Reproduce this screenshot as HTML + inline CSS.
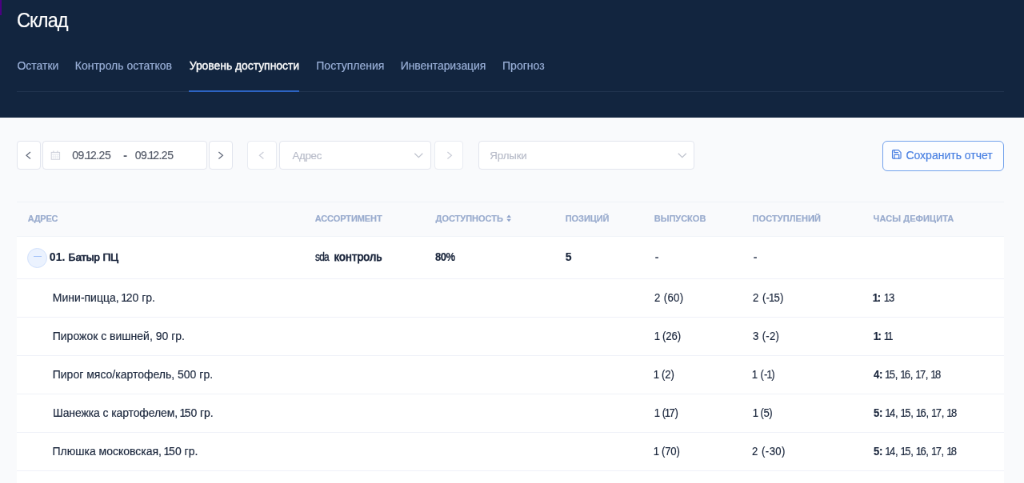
<!DOCTYPE html>
<html lang="ru">
<head>
<meta charset="utf-8">
<title>Склад</title>
<style>
*{box-sizing:border-box;margin:0;padding:0}
html,body{width:1024px;height:483px;overflow:hidden;background:#f9fafc}
body{font-family:"Liberation Sans",sans-serif;color:#1d2b44;position:relative}
#app{position:absolute;left:0;top:0;width:1280px;height:604px;transform:scale(0.8);transform-origin:0 0;background:#f9fafc;will-change:transform}
.hdr{position:absolute;left:0;top:0;width:1280px;height:147px;background:#12253f}
.purple{position:absolute;left:0;top:0;width:2.3px;height:19px;background:#4b0082}
.tabline{position:absolute;left:21px;top:114px;width:1234px;height:1px;background:#21344f}
.tabact{position:absolute;left:236px;top:113.3px;width:138.3px;height:1.7px;background:#2c63c2}
.box{position:absolute;top:176px;height:36px;background:#fff;border:1px solid #e2e5ee;border-radius:4px}
.box.dim{border-color:#e8ebf2}
.save{position:absolute;left:1102.5px;top:176px;width:152px;height:37.5px;border:1.4px solid #72a1ec;border-radius:6px;background:#fcfdff}
.t{position:absolute;line-height:40px;height:40px;white-space:nowrap;-webkit-text-stroke:0.18px currentColor}
.t b{font-weight:700}
.t i{font-style:normal;margin:0 -1.3px}
.t i.r{margin-right:-0.7px}
.tbl{position:absolute;left:21px;top:252px;width:1233.5px;height:352px;background:#fff}
.th{position:absolute;left:0;top:0;width:100%;height:43.5px;background:#f9fafc;border-top:1px solid #eff2f7;border-bottom:1px solid #f0f3f8}
.ln{position:absolute;left:0;width:100%;height:1px;background:#eff1f8}
svg{position:absolute;left:0;top:0;overflow:visible}
</style>
</head>
<body>
<div id="app">
<div class="hdr">
  <div class="purple"></div>
  <div class="tabline"></div>
  <div class="tabact"></div>
</div>

<div class="box" style="left:21px;width:30px"></div>
<div class="box" style="left:53px;width:205.5px"></div>
<div class="box" style="left:260.5px;width:30px"></div>
<div class="box dim" style="left:309.4px;width:36.2px"></div>
<div class="box" style="left:349.2px;width:190px"></div>
<div class="box dim" style="left:543.3px;width:36px"></div>
<div class="box" style="left:598.4px;width:269.6px"></div>
<div class="save"></div>

<div class="tbl">
  <div class="th"></div>
  <div class="ln" style="top:95.9px"></div>
  <div class="ln" style="top:143.9px"></div>
  <div class="ln" style="top:191.9px"></div>
  <div class="ln" style="top:239.9px"></div>
  <div class="ln" style="top:287.9px"></div>
  <div class="ln" style="top:335.9px"></div>
</div>
<div style="position:absolute;left:34px;top:309.5px;width:25px;height:25px;border-radius:50%;background:#ebf2fe;border:1px solid #d1e1fc"></div>
<div style="position:absolute;left:42.2px;top:319.9px;width:9.4px;height:1.3px;background:#a3c2f8"></div>

<svg width="1280" height="604" viewBox="0 0 1280 604" fill="none">
  <!-- chevrons -->
  <path d="M38 190 L33 194.2 L38 198.4" stroke="#626a7b" stroke-width="1.25"/>
  <path d="M273.4 190 L278.4 194.2 L273.4 198.4" stroke="#626a7b" stroke-width="1.25"/>
  <path d="M329.4 190 L324.4 194.2 L329.4 198.4" stroke="#cbced8" stroke-width="1.25"/>
  <path d="M559.4 190 L564.4 194.2 L559.4 198.4" stroke="#cbced8" stroke-width="1.25"/>
  <path d="M518.3 191.8 L523.3 196.6 L528.3 191.8" stroke="#bfc3ce" stroke-width="1.25"/>
  <path d="M847.8 191.8 L852.8 196.6 L857.8 191.8" stroke="#bfc3ce" stroke-width="1.25"/>
  <!-- calendar -->
  <rect x="64.2" y="190.4" width="10.4" height="8.8" stroke="#cdd0da" stroke-width="1"/>
  <path d="M66.9 188.6v2.4M71.9 188.6v2.4" stroke="#cdd0da" stroke-width="1.1"/>
  <path d="M64.5 192.9h10" stroke="#dcdfe7" stroke-width="0.8"/>
  <path d="M66.9 193.4v5.5M69.4 193.4v5.5M71.9 193.4v5.5M64.5 196h10" stroke="#e4e6ec" stroke-width="0.7"/>
  <!-- save icon -->
  <svg x="1113.8" y="185.9" width="14" height="14" viewBox="0 0 24 24" fill="none" stroke="#4a80e2" stroke-width="2.1" stroke-linecap="round" stroke-linejoin="round"><path d="M19 21H5a2 2 0 0 1-2-2V5a2 2 0 0 1 2-2h11l5 5v11a2 2 0 0 1-2 2z"/><path d="M17 21v-8H7v8"/><path d="M7 3v5h8"/></svg>
  <!-- sort -->
  <path d="M633.3 272.1 L636.1 268.5 L638.9 272.1z M633.3 273.7 L636.1 277.3 L638.9 273.7z" fill="#8fa3ca"/>
</svg>

<div class="t" style="left:20.82px;top:4.60px;font-size:25.6px;color:#ffffff;letter-spacing:-0.965px;transform:scaleX(0.92);transform-origin:0 0;">Склад</div>
<div class="t" style="left:21.39px;top:61.50px;font-size:14px;color:#9ab0d8;">Остатки</div>
<div class="t" style="left:93.77px;top:61.50px;font-size:14px;color:#9ab0d8;">Контроль остатков</div>
<div class="t" style="left:236.69px;top:61.50px;font-size:14px;color:#ffffff;letter-spacing:-0.070px;-webkit-text-stroke:0.35px #fff;">Уровень доступности</div>
<div class="t" style="left:395.29px;top:61.50px;font-size:14px;color:#9ab0d8;">Поступления</div>
<div class="t" style="left:500.74px;top:61.50px;font-size:14px;color:#9ab0d8;letter-spacing:-0.100px;">Инвентаризация</div>
<div class="t" style="left:628.05px;top:61.50px;font-size:14px;color:#9ab0d8;">Прогноз</div>
<div class="t" style="left:90.14px;top:173.60px;font-size:14px;color:#555b69;letter-spacing:-0.478px;">09.<i>1</i>2.25</div>
<div class="t" style="left:154.17px;top:173.60px;font-size:14px;color:#555b69;font-weight:700;">-</div>
<div class="t" style="left:168.70px;top:173.60px;font-size:14px;color:#555b69;letter-spacing:-0.527px;">09.<i>1</i>2.25</div>
<div class="t" style="left:365.44px;top:174.60px;font-size:13.3px;color:#b8bcc9;letter-spacing:-0.282px;">Адрес</div>
<div class="t" style="left:612.36px;top:174.60px;font-size:13.3px;color:#b8bcc9;letter-spacing:-0.137px;">Ярлыки</div>
<div class="t" style="left:1132.38px;top:174.00px;font-size:14px;color:#4a80e2;">Сохранить отчет</div>
<div class="t" style="left:34.64px;top:252.80px;font-size:11px;color:#9aacce;font-weight:700;letter-spacing:-0.252px;">АДРЕС</div>
<div class="t" style="left:393.63px;top:252.80px;font-size:11px;color:#9aacce;font-weight:700;letter-spacing:-0.083px;">АССОРТИМЕНТ</div>
<div class="t" style="left:544.55px;top:252.80px;font-size:11px;color:#9aacce;font-weight:700;">ДОСТУПНОСТЬ</div>
<div class="t" style="left:706.67px;top:252.80px;font-size:11px;color:#9aacce;font-weight:700;letter-spacing:-0.043px;">ПОЗИЦИЙ</div>
<div class="t" style="left:817.72px;top:252.80px;font-size:11px;color:#9aacce;font-weight:700;">ВЫПУСКОВ</div>
<div class="t" style="left:940.61px;top:252.80px;font-size:11px;color:#9aacce;font-weight:700;letter-spacing:0.094px;">ПОСТУПЛЕНИЙ</div>
<div class="t" style="left:1091.58px;top:252.80px;font-size:11px;color:#9aacce;font-weight:700;letter-spacing:0.095px;">ЧАСЫ ДЕФИЦИТА</div>
<div class="t" style="left:61.85px;top:301.20px;font-size:14px;color:#1b273d;font-weight:700;letter-spacing:0.008px;">01.</div>
<div class="t" style="left:85.56px;top:302.20px;font-size:13.7px;color:#172239;letter-spacing:-0.154px;-webkit-text-stroke:0.7px #172239;">Батыр ПЦ</div>
<div class="t" style="left:394.07px;top:301.20px;font-size:14px;color:#1b273d;letter-spacing:-0.862px;-webkit-text-stroke:0.4px #1b273d;transform:scaleX(0.85);transform-origin:0 0;">sda</div>
<div class="t" style="left:417.70px;top:301.20px;font-size:14px;color:#172239;letter-spacing:0.134px;-webkit-text-stroke:0.75px #172239;">контроль</div>
<div class="t" style="left:543.77px;top:301.20px;font-size:14px;color:#1b273d;font-weight:700;letter-spacing:-0.557px;transform:scaleX(0.93);transform-origin:0 0;">80%</div>
<div class="t" style="left:706.65px;top:301.20px;font-size:14px;color:#1b273d;font-weight:700;">5</div>
<div class="t" style="left:818.69px;top:301.20px;font-size:14px;color:#4a5468;font-weight:700;">-</div>
<div class="t" style="left:941.66px;top:301.20px;font-size:14px;color:#4a5468;font-weight:700;">-</div>
<div class="t" style="left:65.85px;top:352.20px;font-size:14px;color:#1b273d;">Мини-пицца, <i>1</i>20 гр.</div>
<div class="t" style="left:818.01px;top:352.20px;font-size:14px;color:#1b273d;letter-spacing:0.292px;word-spacing:0.3px;transform:scaleX(0.94);transform-origin:0 0;">2 (60)</div>
<div class="t" style="left:940.52px;top:352.20px;font-size:14px;color:#1b273d;letter-spacing:0.335px;word-spacing:0.3px;transform:scaleX(0.94);transform-origin:0 0;">2 (-<i>1</i>5)</div>
<div class="t" style="left:1092.37px;top:352.20px;font-size:14px;color:#1b273d;letter-spacing:0.029px;word-spacing:1.2px;transform:scaleX(0.93);transform-origin:0 0;"><b><i>1</i>:</b> <i>1</i>3</div>
<div class="t" style="left:65.74px;top:400.20px;font-size:14px;color:#1b273d;">Пирожок с вишней, 90 гр.</div>
<div class="t" style="left:818.61px;top:400.20px;font-size:14px;color:#1b273d;letter-spacing:-0.163px;word-spacing:0.3px;transform:scaleX(0.94);transform-origin:0 0;"><i class="r">1</i> (26)</div>
<div class="t" style="left:940.82px;top:400.20px;font-size:14px;color:#1b273d;letter-spacing:0.243px;word-spacing:0.3px;transform:scaleX(0.94);transform-origin:0 0;">3 (-2)</div>
<div class="t" style="left:1093.13px;top:400.20px;font-size:14px;color:#1b273d;letter-spacing:-0.366px;word-spacing:1.2px;transform:scaleX(0.93);transform-origin:0 0;"><b><i>1</i>:</b> <i>1</i><i>1</i></div>
<div class="t" style="left:65.72px;top:448.20px;font-size:14px;color:#1b273d;">Пирог мясо/картофель, 500 гр.</div>
<div class="t" style="left:818.31px;top:448.20px;font-size:14px;color:#1b273d;letter-spacing:-0.189px;word-spacing:0.3px;transform:scaleX(0.94);transform-origin:0 0;"><i class="r">1</i> (2)</div>
<div class="t" style="left:941.32px;top:448.20px;font-size:14px;color:#1b273d;letter-spacing:0.060px;word-spacing:0.3px;transform:scaleX(0.94);transform-origin:0 0;"><i class="r">1</i> (-<i>1</i>)</div>
<div class="t" style="left:1091.52px;top:448.20px;font-size:14px;color:#1b273d;letter-spacing:-0.365px;word-spacing:1.2px;transform:scaleX(0.93);transform-origin:0 0;"><b>4:</b> <i>1</i>5, <i>1</i>6, <i>1</i>7, <i>1</i>8</div>
<div class="t" style="left:65.92px;top:496.20px;font-size:14px;color:#1b273d;letter-spacing:-0.110px;">Шанежка с картофелем, <i>1</i>50 гр.</div>
<div class="t" style="left:818.95px;top:496.20px;font-size:14px;color:#1b273d;letter-spacing:-0.305px;word-spacing:0.3px;transform:scaleX(0.94);transform-origin:0 0;"><i class="r">1</i> (<i>1</i>7)</div>
<div class="t" style="left:941.86px;top:496.20px;font-size:14px;color:#1b273d;letter-spacing:-0.468px;word-spacing:0.3px;transform:scaleX(0.94);transform-origin:0 0;"><i class="r">1</i> (5)</div>
<div class="t" style="left:1091.65px;top:496.20px;font-size:14px;color:#1b273d;letter-spacing:-0.322px;word-spacing:1.2px;transform:scaleX(0.93);transform-origin:0 0;"><b>5:</b> <i>1</i>4, <i>1</i>5, <i>1</i>6, <i>1</i>7, <i>1</i>8</div>
<div class="t" style="left:65.49px;top:544.20px;font-size:14px;color:#1b273d;">Плюшка московская, <i>1</i>50 гр.</div>
<div class="t" style="left:818.01px;top:544.20px;font-size:14px;color:#1b273d;letter-spacing:-0.223px;word-spacing:0.3px;transform:scaleX(0.94);transform-origin:0 0;"><i class="r">1</i> (70)</div>
<div class="t" style="left:940.47px;top:544.20px;font-size:14px;color:#1b273d;letter-spacing:0.432px;word-spacing:0.3px;transform:scaleX(0.94);transform-origin:0 0;">2 (-30)</div>
<div class="t" style="left:1092.07px;top:544.20px;font-size:14px;color:#1b273d;letter-spacing:-0.323px;word-spacing:1.2px;transform:scaleX(0.93);transform-origin:0 0;"><b>5:</b> <i>1</i>4, <i>1</i>5, <i>1</i>6, <i>1</i>7, <i>1</i>8</div>
</div>
</body>
</html>
